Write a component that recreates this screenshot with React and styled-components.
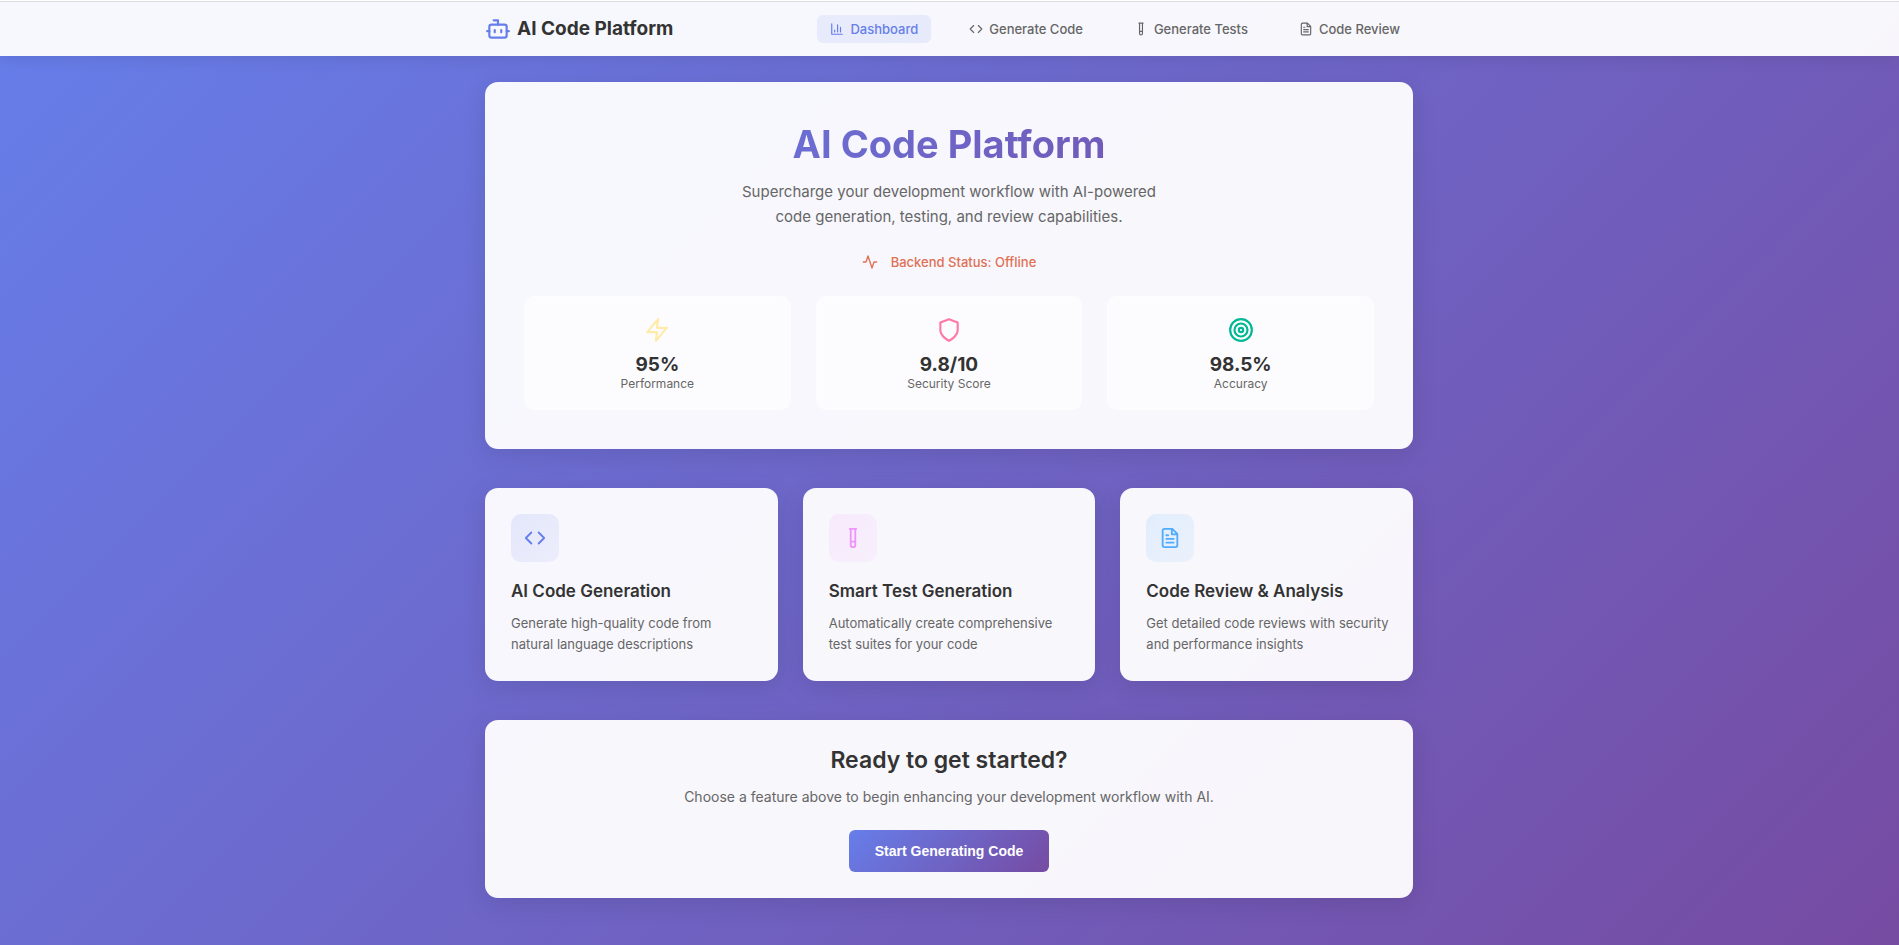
import React from 'react';
import styled, { createGlobalStyle } from 'styled-components';

const GlobalStyle = createGlobalStyle`
  * { box-sizing: border-box; margin: 0; padding: 0; }
  body {
    font-family: Inter, 'Liberation Sans', sans-serif;
    color: #333;
    -webkit-font-smoothing: antialiased;
  }
`;

const Page = styled.div`
  min-height: 100vh;
  background: linear-gradient(135deg, #667eea 0%, #764ba2 100%);
`;

const Header = styled.header`
  border-top: 1px solid #fff;
  background: rgba(255, 255, 255, 0.95);
  background-clip: padding-box;
  box-shadow: inset 0 1px 0 #dcdce0, 0 2px 16px rgba(0, 0, 0, 0.1);
`;

const Container = styled.div`
  max-width: 961px;
  margin: 0 auto;
  padding: 0 17px 0 16px;
`;

const HeaderBar = styled(Container)`
  display: flex;
  align-items: center;
  justify-content: space-between;
  padding-top: 14px;
  padding-bottom: 13px;
`;

const Logo = styled.a`
  display: flex;
  align-items: center;
  gap: 6px;
  font-size: 19px;
  font-weight: 700;
  line-height: 26px;
  color: #333;
  text-decoration: none;
  svg { color: #667eea; }
`;

const Nav = styled.nav`
  display: flex;
  gap: 25px;
`;

const NavLink = styled.a`
  display: flex;
  align-items: center;
  gap: 6px;
  padding: 6px 13px;
  border-radius: 6px;
  font-size: 13px;
  font-weight: 500;
  line-height: 16px;
  text-decoration: none;
  color: ${(p) => (p.$active ? '#667eea' : '#666')};
  background: ${(p) => (p.$active ? 'rgba(102, 126, 234, 0.1)' : 'transparent')};
`;

const Main = styled(Container).attrs({ as: 'main' })`
  display: flex;
  flex-direction: column;
  gap: 39px;
  padding-top: 26px;
  padding-bottom: 26px;
`;

const Card = styled.section`
  background: rgba(255, 255, 255, 0.95);
  border-radius: 13px;
  box-shadow: 0 6px 26px rgba(0, 0, 0, 0.1);
  padding: 26px;
`;

const Hero = styled(Card)`
  padding: 39px;
  text-align: center;
`;

const HeroTitle = styled.h1`
  font-size: 38px;
  font-weight: 700;
  line-height: 46px;
  margin-bottom: 12px;
  background: linear-gradient(135deg, #667eea 0%, #764ba2 100%);
  background-clip: text;
  -webkit-background-clip: text;
  color: transparent;
`;

const HeroText = styled.p`
  max-width: 440px;
  margin: 0 auto 25px;
  font-size: 15px;
  line-height: 25px;
  color: #666;
`;

const Status = styled.div`
  display: flex;
  align-items: center;
  justify-content: center;
  gap: 13px;
  margin-bottom: 26px;
  font-size: 13px;
  font-weight: 500;
  line-height: 16px;
  color: #e17055;
`;

const Grid = styled.div`
  display: grid;
  grid-template-columns: repeat(3, 1fr);
  gap: 25px;
`;

const Stat = styled.div`
  display: flex;
  flex-direction: column;
  align-items: center;
  padding: 20px 20px 18px;
  border: 1px solid rgba(255, 255, 255, 0.2);
  border-radius: 10px;
  background: rgba(255, 255, 255, 0.6);
  svg { color: ${(p) => p.$color}; margin-bottom: 10px; }
`;

const StatValue = styled.div`
  font-size: 19px;
  font-weight: 700;
  line-height: 23px;
`;

const StatLabel = styled.div`
  font-size: 12px;
  line-height: 15px;
  color: #666;
`;

const FeatureCard = styled(Card).attrs({ as: 'article' })`
  padding-right: 22px;
`;

const IconBox = styled.div`
  display: flex;
  align-items: center;
  justify-content: center;
  width: 48px;
  height: 48px;
  margin-bottom: 19px;
  border-radius: 10px;
  color: ${(p) => p.$color};
  background: linear-gradient(135deg, ${(p) => p.$color}22, ${(p) => p.$color}14);
`;

const FeatureTitle = styled.h2`
  font-size: 17px;
  font-weight: 600;
  line-height: 20px;
  margin-bottom: 12px;
`;

const FeatureText = styled.p`
  font-size: 13px;
  line-height: 21px;
  color: #666;
`;

const Cta = styled(Card)`
  display: flex;
  flex-direction: column;
  align-items: center;
  text-align: center;
`;

const CtaTitle = styled.h2`
  font-size: 23px;
  font-weight: 600;
  line-height: 28px;
  margin-bottom: 13px;
`;

const CtaText = styled.p`
  font-size: 14px;
  line-height: 19px;
  margin-bottom: 24px;
  color: #666;
`;

const CtaButton = styled.button`
  padding: 13px 26px;
  border: none;
  border-radius: 6px;
  background: linear-gradient(135deg, #667eea 0%, #764ba2 100%);
  color: #fff;
  font-family: 'Liberation Sans', Arial, sans-serif;
  font-size: 14px;
  font-weight: 600;
  line-height: 16px;
  cursor: pointer;
`;

const shapes = {
  bot: (
    <>
      <path d="M12 8V4H8" />
      <rect width="16" height="12" x="4" y="8" rx="2" />
      <path d="M2 14h2M20 14h2M15 13v2M9 13v2" />
    </>
  ),
  chart: <path d="M3 3v18h18M18 17V9M13 17V5M8 17v-3" />,
  code: <path d="m16 18 6-6-6-6M8 6l-6 6 6 6" />,
  tube: <path d="M14.5 2v17.5a2.5 2.5 0 0 1-5 0V2M8.5 2h7M14.5 16h-5" />,
  file: (
    <path d="M14.5 2H6a2 2 0 0 0-2 2v16a2 2 0 0 0 2 2h12a2 2 0 0 0 2-2V7.5L14.5 2ZM14 2v6h6M10 9H8M16 13H8M16 17H8" />
  ),
  activity: <path d="M22 12h-4l-3 9L9 3l-3 9H2" />,
  zap: <path d="M13 2 3 14h9l-1 8 10-12h-9z" />,
  shield: <path d="M12 22s8-4 8-10V5l-8-3-8 3v7c0 6 8 10 8 10" />,
  target: (
    <>
      <circle cx="12" cy="12" r="10" />
      <circle cx="12" cy="12" r="6" />
      <circle cx="12" cy="12" r="2" />
    </>
  ),
};

function Icon({ name, size }) {
  return (
    <svg
      width={size}
      height={size}
      viewBox="0 0 24 24"
      fill="none"
      stroke="currentColor"
      strokeWidth="2"
      strokeLinecap="round"
      strokeLinejoin="round"
      aria-hidden="true"
    >
      {shapes[name]}
    </svg>
  );
}

const links = [
  { icon: 'chart', label: 'Dashboard', href: '#dashboard' },
  { icon: 'code', label: 'Generate Code', href: '#generate' },
  { icon: 'tube', label: 'Generate Tests', href: '#tests' },
  { icon: 'file', label: 'Code Review', href: '#review' },
];

const stats = [
  { icon: 'zap', color: '#ffeaa7', value: '95%', label: 'Performance' },
  { icon: 'shield', color: '#fd79a8', value: '9.8/10', label: 'Security Score' },
  { icon: 'target', color: '#00b894', value: '98.5%', label: 'Accuracy' },
];

const features = [
  {
    icon: 'code',
    color: '#667eea',
    title: 'AI Code Generation',
    text: 'Generate high-quality code from natural language descriptions',
  },
  {
    icon: 'tube',
    color: '#f093fb',
    title: 'Smart Test Generation',
    text: 'Automatically create comprehensive test suites for your code',
  },
  {
    icon: 'file',
    color: '#4facfe',
    title: 'Code Review & Analysis',
    text: 'Get detailed code reviews with security and performance insights',
  },
];

export default function App() {
  return (
    <Page>
      <GlobalStyle />
      <Header>
        <HeaderBar>
          <Logo href="#dashboard">
            <Icon name="bot" size={26} />
            AI Code Platform
          </Logo>
          <Nav>
            {links.map((l, i) => (
              <NavLink key={l.label} href={l.href} $active={i === 0}>
                <Icon name={l.icon} size={14} />
                {l.label}
              </NavLink>
            ))}
          </Nav>
        </HeaderBar>
      </Header>
      <Main>
        <Hero>
          <HeroTitle>AI Code Platform</HeroTitle>
          <HeroText>
            Supercharge your development workflow with AI-powered code generation, testing, and
            review capabilities.
          </HeroText>
          <Status>
            <Icon name="activity" size={16} />
            Backend Status: Offline
          </Status>
          <Grid>
            {stats.map((s) => (
              <Stat key={s.label} $color={s.color}>
                <Icon name={s.icon} size={26} />
                <StatValue>{s.value}</StatValue>
                <StatLabel>{s.label}</StatLabel>
              </Stat>
            ))}
          </Grid>
        </Hero>
        <Grid>
          {features.map((f) => (
            <FeatureCard key={f.title}>
              <IconBox $color={f.color}>
                <Icon name={f.icon} size={22} />
              </IconBox>
              <FeatureTitle>{f.title}</FeatureTitle>
              <FeatureText>{f.text}</FeatureText>
            </FeatureCard>
          ))}
        </Grid>
        <Cta>
          <CtaTitle>Ready to get started?</CtaTitle>
          <CtaText>Choose a feature above to begin enhancing your development workflow with AI.</CtaText>
          <CtaButton type="button">Start Generating Code</CtaButton>
        </Cta>
      </Main>
    </Page>
  );
}
